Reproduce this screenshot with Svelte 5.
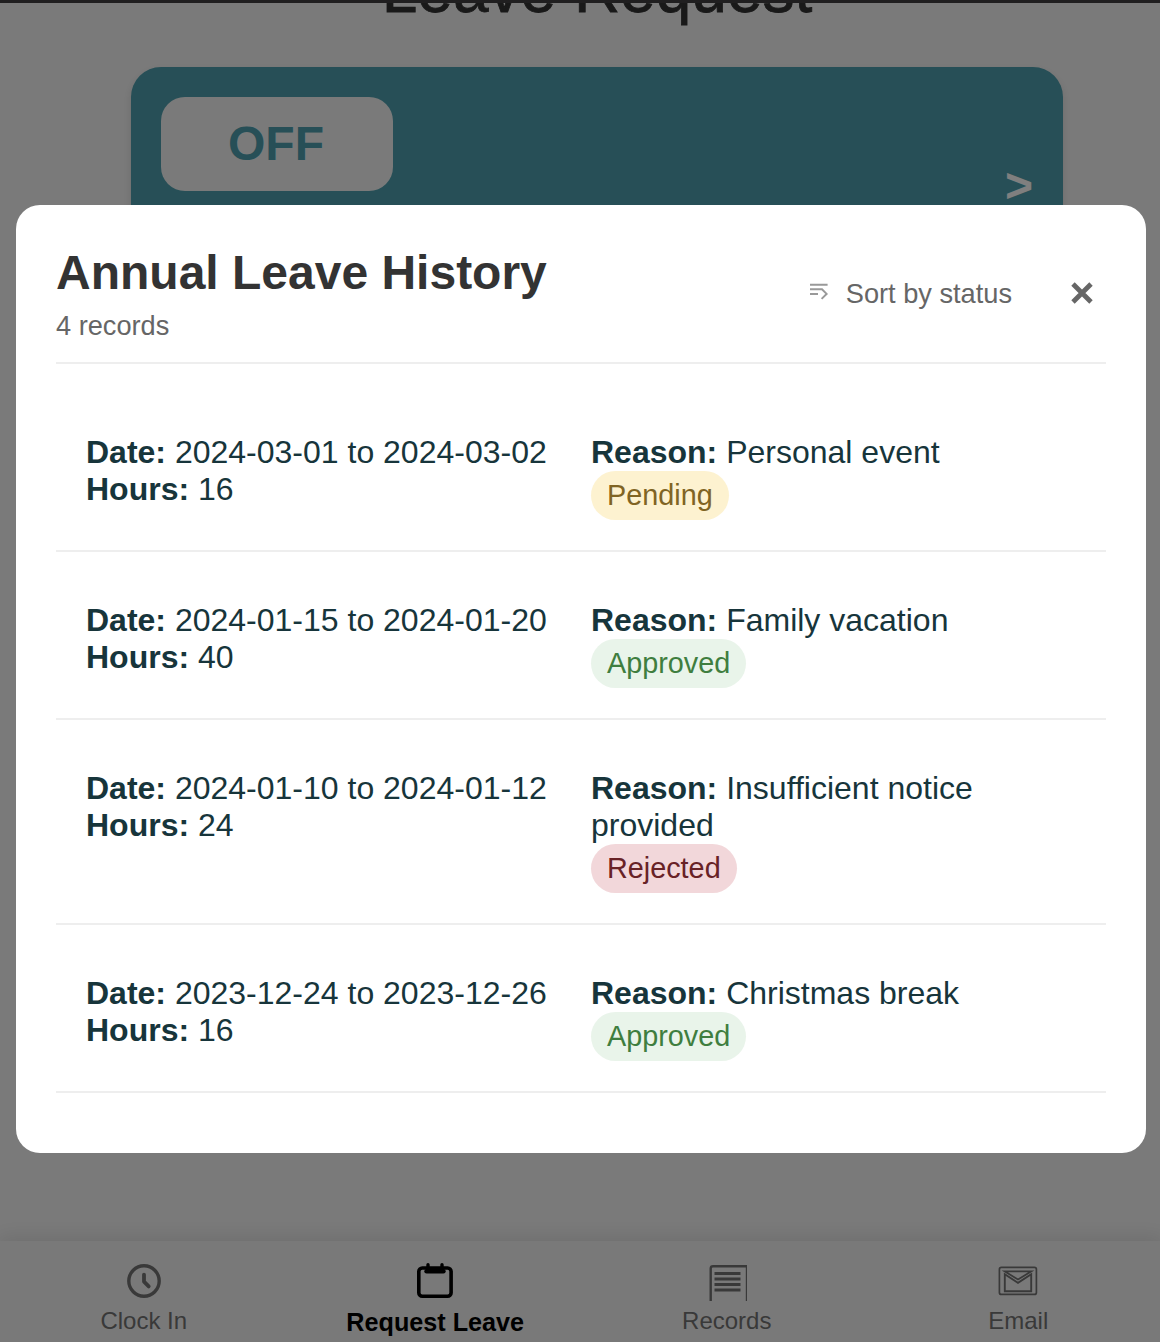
<script>
  const records = [
    { date: '2024-03-01 to 2024-03-02', hours: 16, reason: 'Personal event', status: 'Pending' },
    { date: '2024-01-15 to 2024-01-20', hours: 40, reason: 'Family vacation', status: 'Approved' },
    { date: '2024-01-10 to 2024-01-12', hours: 24, reason: 'Insufficient notice provided', status: 'Rejected' },
    { date: '2023-12-24 to 2023-12-26', hours: 16, reason: 'Christmas break', status: 'Approved' }
  ];
</script>

<div class="screen">
  <div class="page">
    <h1>Leave Request</h1>
    <section class="card">
      <div class="off">OFF</div>
      <span class="arrow">&gt;</span>
    </section>
  </div>

  <nav>
    <div class="tab">
      <svg width="40" height="40" viewBox="0 0 40 40" fill="none" stroke="currentColor">
        <circle cx="20" cy="20" r="15.2" stroke-width="3.4" />
        <path d="M20 13.6v7l4.7 4.8" stroke-width="3.8" stroke-linecap="round" stroke-linejoin="round" />
      </svg>
      <span>Clock In</span>
    </div>
    <div class="tab active">
      <svg width="40" height="40" viewBox="0 0 40 40" fill="none" stroke="currentColor">
        <rect x="3.8" y="7" width="32.3" height="28.2" rx="3.5" stroke-width="3.6" />
        <path d="M13 3.8v5M27 3.8v5" stroke-width="3.4" stroke-linecap="round" />
        <path d="M11.5 10.3h17" stroke-width="4.4" stroke-linecap="round" />
      </svg>
      <span>Request Leave</span>
    </div>
    <div class="tab">
      <svg width="40" height="40" viewBox="0 0 40 40" fill="none" stroke="currentColor">
        <path d="M3.7 40V7.4Q3.7 5.2 6 5.2H40" stroke-width="2.4" />
        <path d="M39.5 5v35" stroke-width="1.4" />
        <path d="M7.5 12.5h26M7.5 18h26M7.5 23.5h26M7.5 29h26" stroke-width="2.8" />
      </svg>
      <span>Records</span>
    </div>
    <div class="tab">
      <svg width="40" height="40" viewBox="0 0 40 40" fill="none" stroke="currentColor">
        <rect x="1.4" y="6.4" width="37" height="27" rx="2" stroke-width="1.7" />
        <path d="M6.8 13.3V30.2h26.4V13.3L20 21.8Z" stroke-width="1.9" />
        <path d="M6.6 10.3h26.8L20 18.5Z" stroke-width="1.7" />
      </svg>
      <span>Email</span>
    </div>
  </nav>

  <div class="overlay">
    <div class="modal">
      <header>
        <div>
          <h2>Annual Leave History</h2>
          <p class="count">{records.length} records</p>
        </div>
        <div class="actions">
          <button class="sort">
            <svg width="20" height="20" viewBox="0 0 20 20" fill="none" stroke="#999" stroke-width="2">
              <path d="M1 2.8h17.6M1 7.3H13l4.6 4.6-5 5M1 12h8" />
            </svg>
            <span>Sort by status</span>
          </button>
          <button class="close" aria-label="Close">
            <svg width="22" height="22" viewBox="0 0 22 22" stroke="#666" stroke-width="4.8">
              <path d="M2 2l18 18M20 2L2 20" />
            </svg>
          </button>
        </div>
      </header>
      <ul>
        {#each records as r}
          <li>
            <div><strong>Date:</strong> {r.date}<br /><strong>Hours:</strong> {r.hours}</div>
            <div>
              <strong>Reason:</strong> {r.reason}
              <span class="badge {r.status.toLowerCase()}">{r.status}</span>
            </div>
          </li>
        {/each}
      </ul>
    </div>
  </div>
</div>

<style>
  :global(body) {
    margin: 0;
    background: #f5f5f5;
  }
  .screen {
    position: relative;
    box-sizing: border-box;
    width: 1160px;
    height: 1342px;
    overflow: hidden;
    display: flex;
    flex-direction: column;
    background: #f5f5f5;
    border-top: 3px solid #201f20;
    font-family: 'Liberation Sans', Arial, sans-serif;
  }
  .page {
    flex: 1;
    min-height: 0;
    overflow: hidden;
    padding: 0 97px 0 131px;
  }
  h1 {
    margin: -50px 0 40px;
    font-size: 64px;
    font-weight: 400;
    line-height: 74px;
    text-align: center;
    color: #333;
    -webkit-text-stroke: 0.8px #333;
  }
  .card {
    box-sizing: border-box;
    height: 180px;
    padding: 30px;
    border-radius: 30px;
    background: #4e9fae;
    box-shadow: 0 4px 10px rgba(0, 0, 0, 0.12);
    display: flex;
    justify-content: space-between;
    align-items: flex-start;
  }
  .off {
    box-sizing: border-box;
    width: 232px;
    height: 94px;
    padding-right: 2px;
    border-radius: 24px;
    background: #f5f5f5;
    color: #4e9fae;
    font-size: 48px;
    font-weight: 700;
    line-height: 93px;
    text-align: center;
  }
  .arrow {
    margin-top: 61px;
    color: #fff;
    font-size: 48px;
    font-weight: 700;
    line-height: 55px;
  }
  nav {
    flex: none;
    box-sizing: border-box;
    width: 1166px;
    height: 101px;
    margin-left: -2px;
    padding-top: 20px;
    display: grid;
    grid-template-columns: repeat(4, 1fr);
    background: #f3f3f3;
    box-shadow: 0 -4px 20px rgba(0, 0, 0, 0.1);
  }
  .tab {
    display: flex;
    flex-direction: column;
    align-items: center;
    color: #737373;
    font-size: 24px;
    line-height: 28px;
    gap: 6px;
  }
  .tab svg {
    flex: none;
  }
  .tab.active {
    gap: 7px;
    color: #000;
    font-size: 25.2px;
    font-weight: 700;
  }
  .overlay {
    position: absolute;
    inset: 0;
    padding: 202px 14px 0 16px;
    background: rgba(0, 0, 0, 0.5);
  }
  .modal {
    box-sizing: border-box;
    height: 948px;
    padding: 40px;
    border-radius: 24px;
    background: #fff;
  }
  header {
    box-sizing: border-box;
    height: 119px;
    display: flex;
    justify-content: space-between;
    border-bottom: 2px solid #eee;
  }
  h2 {
    margin: 0;
    color: #333;
    font-size: 48px;
    line-height: 55px;
  }
  .count {
    margin: 10px 0 0;
    color: #666;
    font-size: 27.2px;
    line-height: 31px;
  }
  .actions {
    display: flex;
    align-items: flex-start;
    padding: 33px 13px 0 0;
    gap: 59px;
  }
  button {
    padding: 0;
    border: 0;
    background: none;
    color: #666;
    font: 27.2px/31px 'Liberation Sans', Arial, sans-serif;
    display: flex;
  }
  .sort {
    gap: 17px;
  }
  .sort svg {
    margin-top: 4px;
  }
  .close {
    margin-top: 4px;
  }
  ul {
    margin: 20px 0 0;
    padding: 0;
    list-style: none;
  }
  li {
    display: grid;
    grid-template-columns: 1fr 1fr;
    gap: 20px;
    padding: 50px 30px 30px;
    border-bottom: 2px solid #eee;
    color: #17353b;
    font-size: 32px;
    line-height: 37px;
  }
  .badge {
    display: block;
    width: fit-content;
    padding: 8px 16px;
    border-radius: 24.5px;
    font-size: 28.8px;
    line-height: 33px;
  }
  .pending {
    background: #fdf2d0;
    color: #806423;
  }
  .approved {
    background: #e9f4ea;
    color: #3f7e3f;
  }
  .rejected {
    background: #f2d7da;
    color: #682226;
  }
</style>
